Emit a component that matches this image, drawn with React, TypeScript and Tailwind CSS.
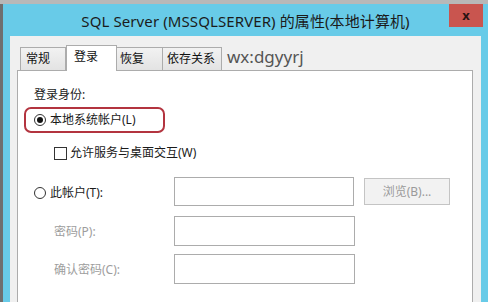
import React from "react";

const FONT = { fontFamily: '"Noto Sans", "Noto Sans CJK SC", sans-serif' };

function Radio({ checked }: { checked?: boolean }) {
  return (
    <div className="w-[12px] h-[12px] rounded-full border border-[#333] bg-white flex items-center justify-center shrink-0">
      {checked && <div className="w-[6px] h-[6px] rounded-full bg-[#111]" />}
    </div>
  );
}

export default function App() {
  return (
    <div
      className="w-[488px] h-[302px] overflow-hidden bg-[#b8b8b8] pt-[4px] flex flex-col"
      style={FONT}
    >
      <div className="flex-1 flex border-l-[3px] border-[#6f6f6f]">
        <div className="flex-1 bg-[#68cbe8] flex flex-col">
          {/* Title bar */}
          <div className="relative h-[32px] flex items-center justify-center">
            <span className="text-[15px] text-[#1b1b1b] leading-none pt-[3px] tracking-[0.1px]">
              SQL Server (MSSQLSERVER) 的属性(本地计算机)
            </span>
            <div className="absolute right-[5px] top-0 w-[34px] h-[23px] bg-[#c9554f] flex items-center justify-center">
              <span className="text-[13px] font-bold text-[#2a1414] leading-none">x</span>
            </div>
          </div>
          {/* Content */}
          <div className="flex-1 ml-[7px] mr-[7px] bg-[#f0f0f0] flex flex-col pt-[9px] pl-[7px] pr-[8px]">
            {/* Tabs */}
            <div className="flex items-end h-[25px] ml-[3px] text-[12px] text-[#111]">
              <div className="w-[46px] h-[23px] border border-b-0 border-[#acacac] bg-gradient-to-b from-[#f2f2f2] to-[#e3e3e3] pl-[5px] flex items-center leading-none">
                常规
              </div>
              <div className="w-[51px] h-[26px] -mb-px border border-b-0 border-[#acacac] bg-white pl-[7px] pb-[4px] flex items-center leading-none relative z-10">
                登录
              </div>
              <div className="w-[46px] h-[23px] border border-b-0 border-l-0 border-[#acacac] bg-gradient-to-b from-[#f2f2f2] to-[#e3e3e3] pl-[3px] flex items-center leading-none">
                恢复
              </div>
              <div className="w-[59px] h-[23px] border border-b-0 border-l-0 border-[#acacac] bg-gradient-to-b from-[#f2f2f2] to-[#e3e3e3] pl-[4px] flex items-center leading-none">
                依存关系
              </div>
              <div className="h-[25px] pl-[5px] flex items-center text-[17px] text-[#555] leading-none pb-[3px]">
                wx:dgyyrj
              </div>
            </div>
            {/* Panel */}
            <div className="flex-1 bg-white border border-b-0 border-[#acacac] flex flex-col text-[12px] text-[#1a1a1a]">
              <div className="mt-[16px] h-[16px] pl-[16px] flex items-center leading-none">登录身份:</div>
              <div className="mt-[4px] ml-[6px] w-[141px] h-[26px] rounded-[7px] border-2 border-[#b3343f] flex items-center pl-[8px] gap-[4px] leading-none">
                <Radio checked />
                <span>本地系统帐户(L)</span>
              </div>
              <div className="mt-[12px] h-[16px] pl-[36px] flex items-center gap-[3px] leading-none">
                <div className="w-[13px] h-[13px] border border-[#333] bg-white" />
                <span>允许服务与桌面交互(W)</span>
              </div>
              <div className="mt-[16px] h-[29px] flex items-center">
                <div className="w-[156px] pl-[16px] pt-[3px] flex items-center gap-[4px] leading-none">
                  <Radio />
                  <span>此帐户(T):</span>
                </div>
                <div className="w-[180px] h-[29px] border border-[#acacac] bg-white" />
                <div className="ml-[10px] w-[86px] h-[27px] border border-[#c4c4c4] bg-[#f2f2f2] flex items-center justify-center text-[#9a9a9a] leading-none">
                  浏览(B)...
                </div>
              </div>
              <div className="mt-[10px] h-[30px] flex items-center">
                <div className="w-[156px] pl-[36px] leading-none text-[#9d9d9d] pt-[2px]">密码(P):</div>
                <div className="w-[181px] h-[30px] border border-[#acacac] bg-white" />
              </div>
              <div className="mt-[8px] h-[30px] flex items-center">
                <div className="w-[156px] pl-[36px] leading-none text-[#9d9d9d] pt-[2px]">确认密码(C):</div>
                <div className="w-[181px] h-[30px] border border-[#acacac] bg-white" />
              </div>
            </div>
          </div>
        </div>
      </div>
    </div>
  );
}
